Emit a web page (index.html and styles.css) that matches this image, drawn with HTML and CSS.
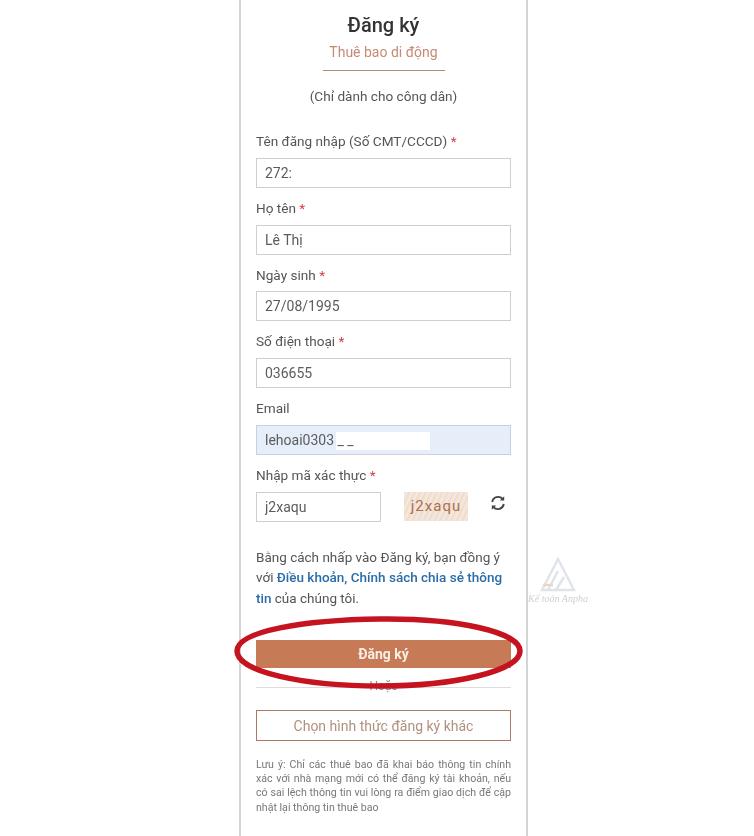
FILE: index.html
```html
<!DOCTYPE html>
<html lang="vi">
<head>
    <meta charset="UTF-8">
    <meta name="viewport" content="width=device-width, initial-scale=1.0">
    <title>Đăng ký</title>
    <link rel="stylesheet" href="styles.css">
</head>
<body>
    <div class="card">
        <form class="card-inner">
            <h1>Đăng ký</h1>
            <div class="tab">Thuê bao di động</div>
            <p class="only">(Chỉ dành cho công dân)</p>

            <label class="field-label">Tên đăng nhập (Số CMT/CCCD) <span class="req">*</span></label>
            <input class="field" type="text" value="272:">

            <label class="field-label">Họ tên <span class="req">*</span></label>
            <input class="field" type="text" value="Lê Thị">

            <label class="field-label">Ngày sinh <span class="req">*</span></label>
            <input class="field" type="text" value="27/08/1995">

            <label class="field-label">Số điện thoại <span class="req">*</span></label>
            <input class="field" type="text" value="036655">

            <label class="field-label">Email</label>
            <input class="field field-email" type="text" value="lehoai0303 _ _">

            <label class="field-label">Nhập mã xác thực <span class="req">*</span></label>
            <div class="captcha-row">
                <input class="field field-captcha" type="text" value="j2xaqu">
                <div class="captcha-img">j2xaqu</div>
                <svg class="refresh" viewBox="0 0 16 16" width="16" height="16" fill="none" stroke="#444" stroke-width="1.8">
                    <path d="M2.2 7A6 6 0 0 1 12.6 3.9"/>
                    <path d="M13.8 9A6 6 0 0 1 3.4 12.1"/>
                    <path d="M14.2 1.2V5.6H9.8Z" fill="#444" stroke="none"/>
                    <path d="M1.8 14.8V10.4H6.2Z" fill="#444" stroke="none"/>
                </svg>
            </div>

            <p class="terms">Bằng cách nhấp vào Đăng ký, bạn đồng ý với <a href="#">Điều khoản, Chính sách chia sẻ thông</a> <a href="#">tin</a> của chúng tôi.</p>

            <button type="button" class="btn-main">Đăng ký</button>
            <div class="or"><span>Hoặc</span></div>
            <button type="button" class="btn-other">Chọn hình thức đăng ký khác</button>

            <p class="note">Lưu ý: Chỉ các thuê bao đã khai báo thông tin chính xác với nhà mạng mới có thể đăng ký tài khoản, nếu có sai lệch thông tin vui lòng ra điểm giao dịch để cập nhật lại thông tin thuê bao</p>
        </form>

        <!-- red circle drawn over the button -->
        <svg class="circle" viewBox="0 0 292 80" width="292" height="80" fill="none">
            <path d="M146 7C222 6 286 20 286 39C286 59 220 74 146 74C70 74 3 60 3 39C3 19 70 8 146 7Z" stroke="#c5141f" stroke-width="5.5"/>
        </svg>

        <div class="watermark">
            <svg viewBox="0 0 36 36" width="36" height="36" fill="none" stroke="#dfe3ea" stroke-width="2.4">
                <path d="M18 2L2 33H34L18 2Z"/>
                <path d="M18 14L8 33"/>
                <path d="M24 20L16 33"/>
                <path d="M3 28H13" stroke="#f1d3c0"/>
            </svg>
            <span>Kế toán Anpha</span>
        </div>
    </div>
</body>
</html>
```

FILE: styles.css
```css
/* Registration card, slightly soft like the photographed page */
html, body {
    height: 100%;
}

body {
    background-color: #fff;
    color: #555;
    font-family: 'Roboto', 'Noto Sans', sans-serif;
    margin: 0;
    padding: 0;
    overflow: hidden;
}

.card {
    position: relative;
    width: 289px;
    height: 836px;
    margin-left: 239px;
    box-sizing: border-box;
    border-left: 2px solid #d4d4d4;
    border-right: 2px solid #d4d4d4;
}

.card-inner {
    padding: 13px 15px 0;
    filter: blur(0.6px);
}

h1 {
    margin: 0;
    font-size: 20px;
    line-height: 24px;
    font-weight: 500;
    text-align: center;
    color: #333;
}

.tab {
    width: 122px;
    box-sizing: border-box;
    margin: 5px auto 0;
    height: 29px;
    line-height: 20px;
    font-size: 14px;
    text-align: center;
    color: #c58a74;
    border-bottom: 1.5px solid #b5886f;
}

.only {
    margin: 15px 0 0;
    font-size: 13.6px;
    line-height: 20px;
    text-align: center;
    color: #555;
}

.field-label {
    display: block;
    padding: 10px 0 6.8px;
    font-size: 13.6px;
    line-height: 20px;
    color: #555;
}

.only + .field-label {
    margin-top: 15px;
}

.req {
    color: #d0404a;
}

.field {
    display: block;
    width: 100%;
    height: 30px;
    box-sizing: border-box;
    padding: 0 8px;
    border: 1.5px solid #cfcfcf;
    border-radius: 0;
    background-color: #fff;
    color: #5c5c5c;
    font-family: inherit;
    font-size: 14px;
    outline: none;
}

.field-email {
    background: linear-gradient(#fff, #fff) no-repeat 79px 6px / 94px 18px, #e6eefa;
    border-color: #c9d1dc;
}

.captcha-row {
    display: flex;
    align-items: flex-start;
}

.field-captcha {
    width: 125px;
}

.captcha-img {
    width: 64px;
    height: 29px;
    margin-left: 23px;
    background: repeating-linear-gradient(115deg, #f0dfd2 0, #f6e9df 3px, #ecd6c6 5px);
    color: #a9714f;
    font-size: 15px;
    line-height: 29px;
    letter-spacing: 1px;
    text-align: center;
}

.refresh {
    margin: 3px 0 0 22px;
}

.terms {
    margin: 25px 0 0;
    font-size: 13.5px;
    line-height: 20.5px;
    color: #555;
}

.terms a {
    color: #2b6ca8;
    font-weight: 500;
    text-decoration: none;
}

.btn-main {
    display: block;
    width: 100%;
    height: 28px;
    margin-top: 32px;
    border: none;
    background-color: #c67a56;
    color: #fbeee6;
    font-family: inherit;
    font-size: 14px;
    font-weight: 700;
}

.or {
    height: 19px;
    border-bottom: 1px solid #ddd;
    text-align: center;
    font-size: 12px;
    line-height: 36px;
    color: #888;
}

.or span {
    background-color: #fff;
    padding: 0 6px;
}

.btn-other {
    display: block;
    width: 100%;
    height: 31px;
    margin-top: 22px;
    box-sizing: border-box;
    border: 1.5px solid #ab7a64;
    background-color: #fff;
    color: #b1907f;
    font-family: inherit;
    font-size: 14px;
}

.note {
    margin: 16.5px 0 0;
    font-size: 10.6px;
    line-height: 14.3px;
    text-align: justify;
    color: #777;
}

.circle {
    position: absolute;
    left: -7px;
    top: 612px;
    filter: blur(0.3px);
}

.watermark {
    position: absolute;
    left: 286px;
    top: 557px;
    width: 62px;
    display: flex;
    flex-direction: column;
    align-items: center;
    filter: blur(0.5px);
}

.watermark span {
    font-family: 'Liberation Serif', serif;
    font-style: italic;
    font-size: 10px;
    line-height: 12px;
    white-space: nowrap;
    color: #d0d0d0;
}
```
